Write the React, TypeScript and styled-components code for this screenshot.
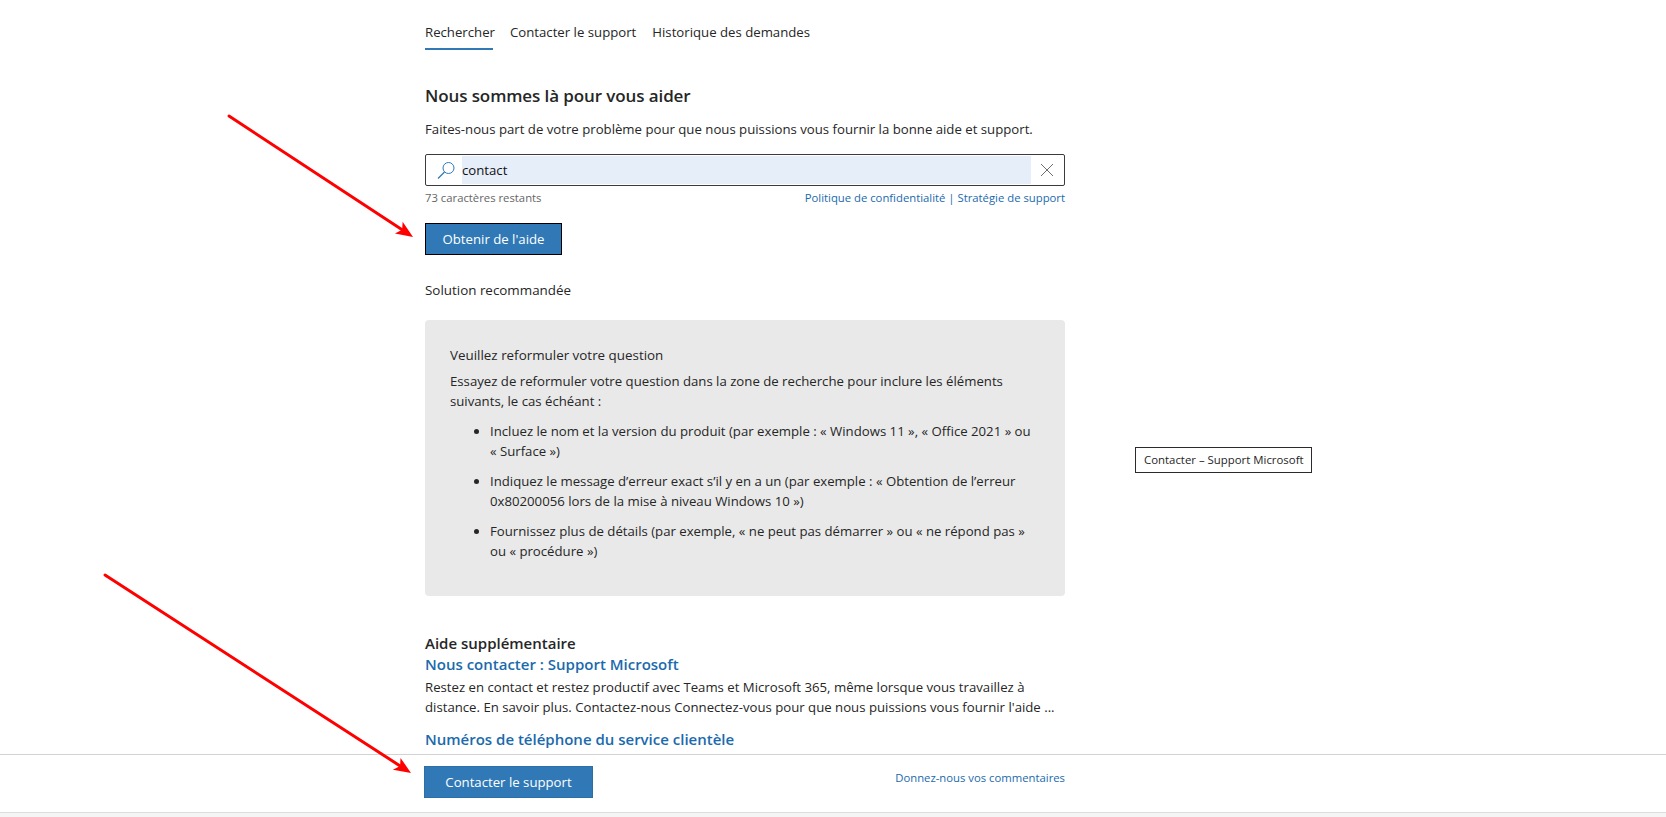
import { FC } from 'react';
import styled, { createGlobalStyle } from 'styled-components';

const FONT = `'Open Sans', 'Noto Sans', sans-serif`;
const LINK = '#1a6aad';
const ACTION = '#3079b6';

const GlobalStyle = createGlobalStyle`
  html, body {
    margin: 0;
    padding: 0;
    background: #ffffff;
  }
  * {
    box-sizing: border-box;
  }
`;

const Page = styled.div`
  position: relative;
  display: flex;
  flex-direction: column;
  height: 100vh;
  overflow: hidden;
  background: #f5f5f5;
  color: #262626;
  font-family: ${FONT};
  font-size: 13.2px;
  line-height: 20px;
`;

const Main = styled.main`
  flex: 1;
  min-height: 0;
  overflow: hidden;
  padding: 20px 0 0 425px;
  background: #ffffff;
`;

const Column = styled.div`
  width: 640px;
`;

const Tabs = styled.nav`
  display: flex;
  gap: 16px;
`;

const Tab = styled.a<{ $active?: boolean }>`
  height: 30px;
  padding-top: 2px;
  border-bottom: 2px solid ${(p) => (p.$active ? ACTION : 'transparent')};
  white-space: nowrap;
`;

const ActiveTab = styled(Tab)`
  width: 68px;
  margin-right: 1px;
`;

const Title = styled.h1`
  margin: 33px 0 0;
  font-size: 17px;
  font-weight: 600;
  line-height: 26px;
  letter-spacing: -0.1px;
`;

const Lead = styled.p`
  margin: 10px 0 0;
`;

const SearchBox = styled.div`
  display: flex;
  align-items: stretch;
  height: 32px;
  margin-top: 15px;
  padding: 1px;
  border: 1px solid #3b3b3b;
  border-radius: 2px;
`;

const SearchIcon = styled.div`
  display: flex;
  align-items: center;
  width: 35px;
  padding-left: 10px;
`;

const SearchField = styled.div`
  flex: 1;
  background: #e6eefa;
  color: #111111;
  line-height: 28px;
`;

const ClearButton = styled.div`
  display: flex;
  align-items: center;
  justify-content: center;
  width: 32px;
`;

const SearchMeta = styled.div`
  display: flex;
  justify-content: space-between;
  margin-top: 2px;
  font-size: 11.3px;
  line-height: 20px;
`;

const Remaining = styled.span`
  color: #666666;
`;

const SmallLink = styled.a`
  color: ${LINK};
  font-size: 11.3px;
  white-space: nowrap;
`;

const PrimaryButton = styled.button<{ $outlined?: boolean }>`
  display: block;
  height: 32px;
  padding: 0;
  border: 1px solid ${(p) => (p.$outlined ? '#000000' : '#2c6fa7')};
  background: ${ACTION};
  color: #ffffff;
  font-family: ${FONT};
  font-size: 13.2px;
`;

const ContactButton = styled(PrimaryButton)`
  width: 169px;
`;

const SubmitButton = styled(PrimaryButton)`
  width: 137px;
  margin-top: 15px;
`;

const SectionLabel = styled.h2`
  margin: 25px 0 0;
  font-size: 13.4px;
  font-weight: 500;
  line-height: 20px;
`;

const Card = styled.section`
  height: 276px;
  margin-top: 20px;
  padding: 25px 25px 0;
  border-radius: 4px;
  background: #e9e9e9;
`;

const CardTitle = styled.h3`
  margin: 0 0 6px;
  font-size: 13.4px;
  font-weight: 500;
  line-height: 20px;
`;

const CardText = styled.p`
  margin: 0;
`;

const BulletList = styled.ul`
  margin: 10px 0 0;
  padding: 0 0 0 40px;
`;

const Bullet = styled.li`
  margin-bottom: 10px;
`;

const MoreTitle = styled.h2`
  margin: 36px 0 0;
  font-size: 15px;
  font-weight: 600;
  line-height: 22px;
`;

const ResultLink = styled.a<{ $spaced?: boolean }>`
  display: block;
  margin-top: ${(p) => (p.$spaced ? '12px' : '0')};
  color: ${LINK};
  font-size: 15px;
  font-weight: 600;
  line-height: 20px;
`;

const ResultText = styled.p`
  margin: 3px 0 0;
  line-height: 20px;
`;

const Footer = styled.footer`
  display: flex;
  align-items: flex-start;
  justify-content: space-between;
  flex-shrink: 0;
  height: 59px;
  margin-bottom: 4px;
  padding: 11px 601px 0 424px;
  border-top: 1px solid #d2d2d2;
  border-bottom: 1px solid #dcdcdc;
  background: #ffffff;
`;

const FeedbackLink = styled(SmallLink)`
  margin-top: 2px;
`;

const PageTooltip = styled.div`
  position: absolute;
  top: 447px;
  left: 1135px;
  width: 177px;
  height: 26px;
  padding-left: 8px;
  border: 1px solid #2b2b2b;
  background: #ffffff;
  font-size: 11.4px;
  line-height: 24px;
  white-space: nowrap;
`;

const ArrowLayer = styled.svg`
  position: absolute;
  inset: 0;
  pointer-events: none;
`;

const Arrow: FC<{ x1: number; y1: number; x2: number; y2: number }> = ({ x1, y1, x2, y2 }) => {
  const angle = Math.atan2(y2 - y1, x2 - x1);
  const ux = Math.cos(angle);
  const uy = Math.sin(angle);
  const head = 17;
  const wing = 7;
  const bx = x2 - ux * head;
  const by = y2 - uy * head;
  const nx = x2 - ux * (head - 4);
  const ny = y2 - uy * (head - 4);
  const ox = -uy * wing;
  const oy = ux * wing;

  return (
    <g>
      <line x1={x1} y1={y1} x2={nx} y2={ny} stroke="#ff0000" strokeWidth="3" strokeLinecap="round" />
      <polygon
        points={`${x2},${y2} ${bx + ox},${by + oy} ${nx},${ny} ${bx - ox},${by - oy}`}
        fill="#ff0000"
      />
    </g>
  );
};

const App: FC = () => (
  <Page>
    <GlobalStyle />
    <Main>
      <Column>
        <Tabs>
          <ActiveTab $active>Rechercher</ActiveTab>
          <Tab>Contacter le support</Tab>
          <Tab>Historique des demandes</Tab>
        </Tabs>

        <Title>Nous sommes là pour vous aider</Title>
        <Lead>Faites-nous part de votre problème pour que nous puissions vous fournir la bonne aide et support.</Lead>

        <SearchBox>
          <SearchIcon>
            <svg width="19" height="19" viewBox="0 0 19 19" fill="none" stroke={ACTION} strokeWidth="1">
              <circle cx="11.5" cy="7" r="5.5" />
              <path d="M7.5 11 1 17.5" strokeWidth="1.2" />
            </svg>
          </SearchIcon>
          <SearchField>contact</SearchField>
          <ClearButton>
            <svg width="14" height="14" viewBox="0 0 14 14" fill="none" stroke="#6e6e6e" strokeWidth="1">
              <path d="M1 1l12 12M13 1 1 13" />
            </svg>
          </ClearButton>
        </SearchBox>

        <SearchMeta>
          <Remaining>73 caractères restants</Remaining>
          <SmallLink>Politique de confidentialité | Stratégie de support</SmallLink>
        </SearchMeta>

        <SubmitButton $outlined>Obtenir de l'aide</SubmitButton>

        <SectionLabel>Solution recommandée</SectionLabel>

        <Card>
          <CardTitle>Veuillez reformuler votre question</CardTitle>
          <CardText>
            Essayez de reformuler votre question dans la zone de recherche pour inclure les éléments suivants, le cas échéant :
          </CardText>
          <BulletList>
            <Bullet>Incluez le nom et la version du produit (par exemple : «&nbsp;Windows&nbsp;11&nbsp;», «&nbsp;Office&nbsp;2021&nbsp;» ou «&nbsp;Surface&nbsp;»)</Bullet>
            <Bullet>Indiquez le message d’erreur exact s’il y en a un (par exemple : «&nbsp;Obtention de l’erreur 0x80200056 lors de la mise à niveau Windows&nbsp;10&nbsp;»)</Bullet>
            <Bullet>Fournissez plus de détails (par exemple, «&nbsp;ne peut pas démarrer&nbsp;» ou «&nbsp;ne répond pas&nbsp;» ou «&nbsp;procédure&nbsp;»)</Bullet>
          </BulletList>
        </Card>

        <MoreTitle>Aide supplémentaire</MoreTitle>
        <ResultLink>Nous contacter : Support Microsoft</ResultLink>
        <ResultText>
          Restez en contact et restez productif avec Teams et Microsoft 365, même lorsque vous travaillez à distance. En savoir plus. Contactez-nous Connectez-vous pour que nous puissions vous fournir l'aide ...
        </ResultText>
        <ResultLink $spaced>Numéros de téléphone du service clientèle</ResultLink>
      </Column>
    </Main>

    <Footer>
      <ContactButton>Contacter le support</ContactButton>
      <FeedbackLink>Donnez-nous vos commentaires</FeedbackLink>
    </Footer>

    <PageTooltip>Contacter – Support Microsoft</PageTooltip>

    <ArrowLayer width="1666" height="817">
      <Arrow x1={229} y1={116} x2={413} y2={237} />
      <Arrow x1={105} y1={575} x2={411} y2={773} />
    </ArrowLayer>
  </Page>
);

export default App;
